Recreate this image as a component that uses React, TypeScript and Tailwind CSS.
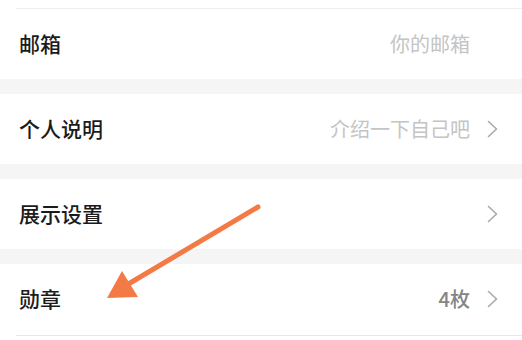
type Row = { label: string; value?: string; valueTone?: "muted" | "strong"; chevron?: boolean };

const rows: Row[] = [
  { label: "邮箱", value: "你的邮箱", valueTone: "muted" },
  { label: "个人说明", value: "介绍一下自己吧", valueTone: "muted", chevron: true },
  { label: "展示设置", chevron: true },
  { label: "勋章", value: "4枚", valueTone: "strong", chevron: true },
];

const Chevron = () => (
  <svg width="11" height="18" viewBox="0 0 11 18" fill="none">
    <polyline points="1.5,1.5 9.5,9 1.5,16.5" stroke="#a9a9a9" strokeWidth="1.6" strokeLinecap="round" strokeLinejoin="round" />
  </svg>
);

const SettingRow = ({ row }: { row: Row }) => (
  <div className="flex h-[70px] items-center bg-white pl-[19px] pr-[24px]">
    <span className="text-[21px] font-medium text-[#1b1b1b]">{row.label}</span>
    <div className="ml-auto flex items-center">
      {row.value && (
        <span
          className={
            row.valueTone === "strong"
              ? "text-[20px] font-medium text-[#858585]"
              : "text-[20px] text-[#c4c4c4]"
          }
        >
          {row.value}
        </span>
      )}
      <span className="ml-[17px] flex w-[11px] items-center">{row.chevron && <Chevron />}</span>
    </div>
  </div>
);

export default function App() {
  return (
    <div
      className="relative h-[340px] w-[522px] overflow-hidden bg-white"
      style={{ fontFamily: '"Noto Sans CJK SC", "Noto Sans", sans-serif' }}
    >
      <div className="h-[9px] bg-white">
        <div className="ml-[16px] h-full border-b border-[#eeeeee]" />
      </div>
      <div className="flex flex-col gap-[15px] bg-[#f5f5f5]">
        {rows.map((row) => (
          <SettingRow key={row.label} row={row} />
        ))}
      </div>
      <div className="ml-[16px] mt-px border-t border-[#e8e8e8]" />

      <svg className="pointer-events-none absolute left-0 top-0" width="522" height="340" viewBox="0 0 522 340">
        <line x1="258" y1="207" x2="125" y2="286" stroke="#f47a45" strokeWidth="5" strokeLinecap="round" />
        <polygon points="107,298 122,271 138,297" fill="#f47a45" />
      </svg>
    </div>
  );
}
